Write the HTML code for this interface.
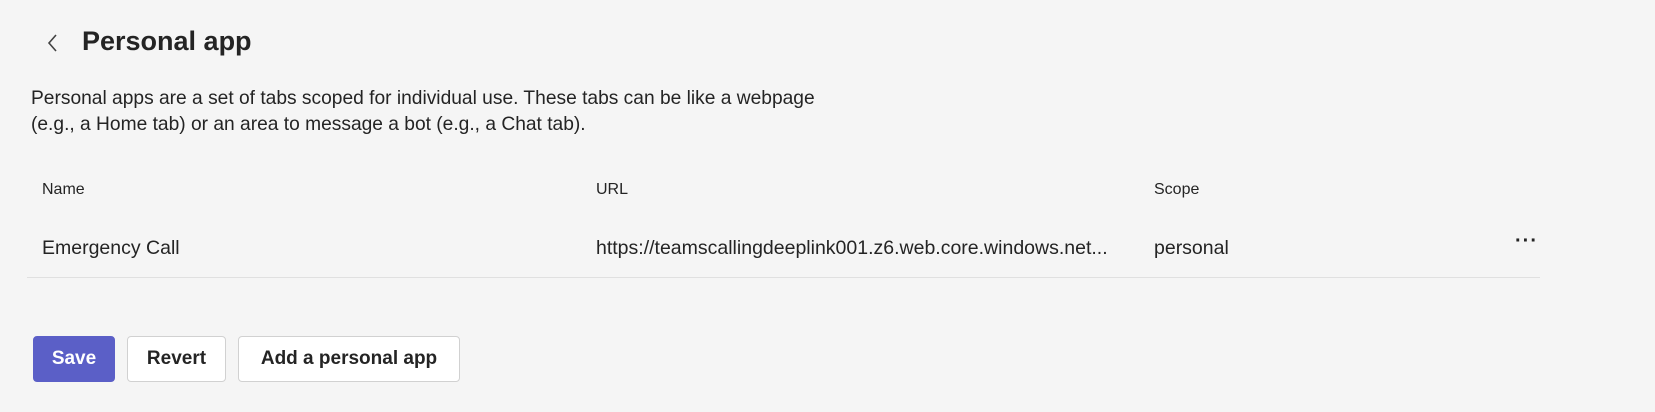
<!DOCTYPE html>
<html><head><style>
body{margin:0;width:1655px;height:412px;background:#f5f5f5;font-family:"Liberation Sans",sans-serif;color:#242424;position:relative;overflow:hidden}
.a{position:absolute;white-space:nowrap}
.btn{position:absolute;top:336px;height:46px;box-sizing:border-box;border:1px solid #d1d1d1;border-radius:4px;background:#fff;font-weight:bold;font-size:19px;line-height:44px;text-align:center}
</style></head><body>
<svg class="a" style="left:46px;top:33px" width="14" height="20" viewBox="0 0 14 20"><path d="M10 2 L3 10 L10 18" fill="none" stroke="#424242" stroke-width="1.6"/></svg>
<div class="a" style="left:82px;top:26px;font-size:27px;font-weight:bold;">Personal app</div>
<div class="a" style="left:31px;top:86px;font-size:19.2px;line-height:26px;">Personal apps are a set of tabs scoped for individual use. These tabs can be like a webpage<br>(e.g., a Home tab) or an area to message a bot (e.g., a Chat tab).</div>
<div class="a" style="left:42px;top:181px;font-size:16px;">Name</div>
<div class="a" style="left:596px;top:181px;font-size:16px;">URL</div>
<div class="a" style="left:1154px;top:181px;font-size:16px;">Scope</div>
<div class="a" style="left:42px;top:237px;font-size:19.5px;">Emergency Call</div>
<div class="a" style="left:596px;top:237px;font-size:19.5px;">https://teamscallingdeeplink001.z6.web.core.windows.net...</div>
<div class="a" style="left:1154px;top:237px;font-size:19.5px;">personal</div>
<div class="a" style="left:1515px;top:230px;font-size:20px;font-weight:bold;letter-spacing:1px">···</div>
<div class="a" style="left:27px;top:277px;width:1513px;height:1px;background:#e0e0e0"></div>
<div class="btn" style="left:33px;width:82px;background:#5b5fc7;border-color:#5b5fc7;color:#fff">Save</div>
<div class="btn" style="left:127px;width:99px">Revert</div>
<div class="btn" style="left:238px;width:222px">Add a personal app</div>
</body></html>
